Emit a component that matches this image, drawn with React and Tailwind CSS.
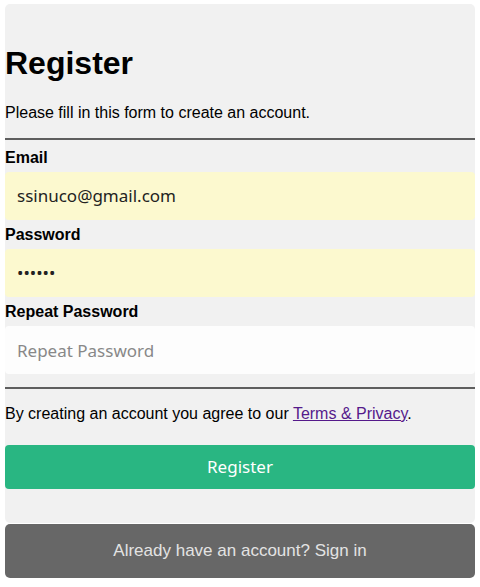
import React from 'react';

const arial = "font-['Liberation_Sans',Arial,sans-serif]";
const noto = "font-['Noto_Sans','Open_Sans',sans-serif]";

const Field = ({ label, children }) => (
  <>
    <label className={`block h-[18px] leading-[18px] text-[16px] font-bold text-black mb-[5px] ${arial}`}>
      {label}
    </label>
    {children}
  </>
);

export default function App() {
  return (
    <div className="px-[5px] pt-[4px] pb-[9px]">
      <form className="bg-[#f1f1f1] rounded-[5px] pb-[34px]" onSubmit={(e) => e.preventDefault()}>
        <h1 className={`pt-[41px] text-[32px] leading-[37px] font-bold text-black ${arial}`}>Register</h1>
        <p className={`mt-[22px] text-[16px] leading-[18px] text-black ${arial}`}>
          Please fill in this form to create an account.
        </p>
        <hr className="mt-[16px] border-0 border-t-2 border-[#5e5e5e]" />

        <div className="mt-[9px]">
          <Field label="Email">
            <div className={`h-[48px] mb-[6px] rounded-[4px] bg-[#fcf9cf] px-[12px] flex items-center text-[17px] text-[#222] ${noto}`}>
              ssinuco@gmail.com
            </div>
          </Field>
          <Field label="Password">
            <div className={`h-[48px] mb-[6px] rounded-[4px] bg-[#fcf9cf] px-[12px] flex items-center text-[17px] text-[#222] ${noto}`}>
              ••••••
            </div>
          </Field>
          <Field label="Repeat Password">
            <input
              type="password"
              placeholder="Repeat Password"
              className={`block w-full h-[48px] rounded-[4px] bg-[#fdfdfd] px-[12px] text-[17px] outline-none placeholder:text-[#888] ${noto}`}
            />
          </Field>
        </div>

        <hr className="mt-[13px] border-0 border-t-2 border-[#5e5e5e]" />
        <p className={`mt-[16px] text-[16px] leading-[18px] text-black ${arial}`}>
          By creating an account you agree to our{' '}
          <a href="#" className="text-[#551a8b] underline">Terms &amp; Privacy</a>.
        </p>

        <button
          type="submit"
          className={`mt-[22px] w-full h-[44px] rounded-[4px] bg-[#29b682] text-white text-[17px] flex items-center justify-center ${noto}`}
        >
          Register
        </button>
      </form>

      <div className={`mt-[1px] h-[54px] rounded-[5px] bg-[#676767] flex items-center justify-center text-[17px] text-[#e3e3e3] ${arial}`}>
        Already have an account?&nbsp;<span>Sign in</span>
      </div>
    </div>
  );
}
